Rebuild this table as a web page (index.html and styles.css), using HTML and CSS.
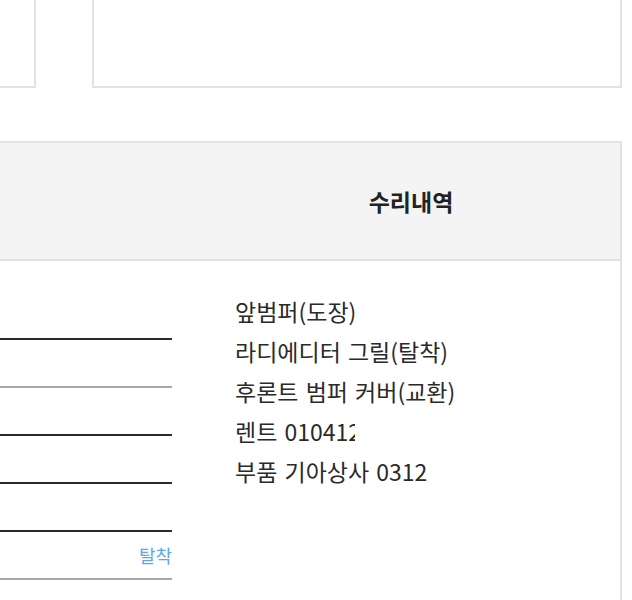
FILE: index.html
```html
<html>
    <head>
        <meta charset="utf-8">
        <link rel="stylesheet" href="styles.css">
    </head>
    <body>
        <div class="page">
            <div class="top-row">
                <div class="box box-left"></div>
                <div class="box box-right"></div>
            </div>
            <div class="repair-table">
                <div class="head">
                    <div class="head-cell"></div>
                    <div class="head-cell">수리내역</div>
                </div>
                <div class="body">
                    <div class="inputs">
                        <div class="field dark"></div>
                        <div class="field light"></div>
                        <div class="field dark"></div>
                        <div class="field dark"></div>
                        <div class="field dark"></div>
                        <div class="field light"><span class="tag">탈착</span></div>
                    </div>
                    <div class="history">
                        <div class="item">앞범퍼(도장)</div>
                        <div class="item">라디에디터 그릴(탈착)</div>
                        <div class="item">후론트 범퍼 커버(교환)</div>
                        <div class="item"><span class="cut">렌트 010412</span></div>
                        <div class="item">부품 기아상사 0312</div>
                    </div>
                </div>
            </div>
        </div>
    </body>
</html>
```
FILE: styles.css
```css
body{
    margin: 0;
    background: #fff;
    font-family: "Noto Sans CJK KR", sans-serif;
    color: #2a2a2a;
    overflow: hidden;
}

.page{
    margin-left: -200px;
    width: 822px;
}

.top-row{
    display: flex;
    margin-top: -20px;
    gap: 56px;
}

.box{
    height: 104px;
    border: 2px solid #e2e2e2;
    background: #fff;
}

.box-left{
    width: 232px;
}

.box-right{
    flex-grow: 1;
}

.repair-table{
    margin-top: 53px;
    border: 2px solid #e2e2e2;
    border-bottom: none;
}

.head{
    display: flex;
    height: 116px;
    background: #f4f4f4;
    border-bottom: 2px solid #e2e2e2;
}

.head-cell{
    display: flex;
    align-items: center;
    justify-content: center;
    font-size: 23px;
    font-weight: bold;
    color: #222;
}

.head-cell:first-child{
    width: 400px;
}

.head-cell:last-child{
    flex-grow: 1;
}

.body{
    display: flex;
    height: 400px;
}

.inputs{
    width: 370px;
    padding-top: 31px;
    padding-right: 28px;
}

.field{
    height: 46px;
    display: flex;
    align-items: center;
    justify-content: flex-end;
}

.dark{
    border-bottom: 2px solid #2a2a2a;
}

.light{
    border-bottom: 2px solid #a8a8a8;
}

.tag{
    font-size: 18px;
    color: #5aa8ee;
}

.history{
    flex-grow: 1;
    padding: 30px 0 0 35px;
}

.item{
    font-size: 23px;
    line-height: 40px;
    word-spacing: 2px;
    white-space: nowrap;
}

.cut{
    display: inline-block;
    width: 120px;
    overflow: hidden;
    vertical-align: top;
}
```
